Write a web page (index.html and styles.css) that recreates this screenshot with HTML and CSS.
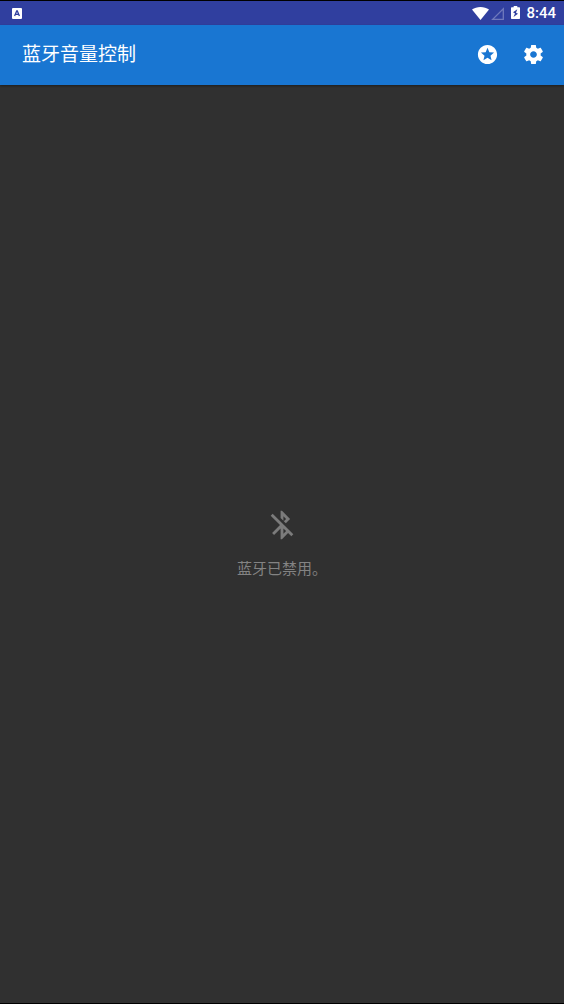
FILE: index.html
```html
<!DOCTYPE html>
<html lang="zh-CN">
<head>
<meta charset="utf-8">
<meta name="viewport" content="width=device-width, initial-scale=1">
<title>蓝牙音量控制</title>
<link rel="stylesheet" href="styles.css">
</head>
<body>
<div class="screen">
  <div class="status-bar">
    <svg class="notice-icon" viewBox="0 0 10 11" aria-hidden="true">
      <rect width="10" height="11" rx="1" fill="#fff"/>
      <path d="M2.600 8 4.700 3h.6l2.100 5M3.500 6.300h3" fill="none" stroke="#303f9f" stroke-width="1.300"/>
    </svg>
    <div class="status-right">
      <svg class="wifi-icon" viewBox="0 0 17 13" aria-hidden="true">
        <path d="M8.500 13 0 2.600C2.400.9 5.200 0 8.500 0S14.600.9 17 2.600z" fill="#fff"/>
      </svg>
      <svg class="signal-icon" viewBox="0 0 13 13" aria-hidden="true">
        <path d="M12.300 1.700v10.600H1.700z" fill="none" stroke="#6f79bc" stroke-width="1.300"/>
      </svg>
      <svg class="battery-icon" viewBox="0 0 9 14" aria-hidden="true">
        <path fill="#fff" fill-rule="evenodd" d="M2.700 0h3.600v1.300h2q.7 0 .7.7v10.300q0 .7-.7.7H.7Q0 13 0 12.300V2q0-.7.7-.7h2zM6.300 3.300 2 6.300 4 7.400 2.500 11 7 7.800 5 6.700z"/>
      </svg>
      <time class="clock">8:44</time>
    </div>
  </div>
  <header class="app-bar">
    <h1 class="title">蓝牙音量控制</h1>
    <button class="action" type="button" aria-label="收藏">
      <svg viewBox="0 0 24 24" aria-hidden="true"><path d="M11.990 2C6.470 2 2 6.480 2 12s4.470 10 9.990 10C17.520 22 22 17.520 22 12S17.520 2 11.990 2zm4.240 16L12 15.450 7.770 18l1.120-4.810-3.730-3.230 4.920-.42L12 5l1.920 4.530 4.920.42-3.730 3.230L16.230 18z"/></svg>
    </button>
    <button class="action" type="button" aria-label="设置">
      <svg viewBox="0 0 24 24" aria-hidden="true"><path d="M19.430 12.980c.04-.32.07-.64.07-.98s-.03-.66-.07-.98l2.110-1.650c.19-.15.24-.42.12-.64l-2-3.460c-.12-.22-.39-.3-.61-.22l-2.490 1c-.52-.4-1.080-.73-1.690-.98l-.38-2.650C14.460 2.180 14.250 2 14 2h-4c-.25 0-.46.18-.49.42l-.38 2.650c-.61.25-1.170.59-1.690.98l-2.490-1c-.23-.09-.49 0-.61.22l-2 3.460c-.13.22-.07.49.12.64l2.110 1.650c-.04.32-.07.65-.07.98s.03.66.07.98l-2.110 1.650c-.19.15-.24.42-.12.64l2 3.460c.12.22.39.3.61.22l2.490-1c.52.4 1.080.73 1.690.98l.38 2.650c.03.24.24.42.49.42h4c.25 0 .46-.18.49-.42l.38-2.650c.61-.25 1.170-.59 1.690-.98l2.490 1c.23.09.49 0 .61-.22l2-3.460c.12-.22.07-.49-.12-.64l-2.110-1.650zM12 15.500c-1.930 0-3.500-1.570-3.500-3.500s1.570-3.500 3.500-3.500 3.500 1.570 3.500 3.500-1.570 3.500-3.500 3.500z"/></svg>
    </button>
  </header>
  <main class="content">
    <svg class="bluetooth-icon" viewBox="0 0 24 24" aria-hidden="true"><path d="M13 5.830l1.880 1.880-1.600 1.600 1.410 1.410 3.020-3.020L12 2h-1v5.030l2 2v-3.200zM5.410 4L4 5.410 10.590 12 5 17.590 6.410 19 11 14.410V22h1l4.290-4.290 2.300 2.290L20 18.590 5.410 4zM13 18.170v-3.760l1.880 1.880L13 18.170z"/></svg>
    <p class="message">蓝牙已禁用。</p>
  </main>
</div>
</body>
</html>
```
FILE: styles.css
```css
* {
  box-sizing: border-box;
}

body {
  margin: 0;
  background: #303030;
  color: #fff;
  font-family: Roboto, "Noto Sans CJK SC", sans-serif;
}

.screen {
  display: flex;
  flex-direction: column;
  min-height: 100vh;
  border-top: 1px solid #000;
  border-bottom: 1px solid #000;
}

.status-bar {
  display: flex;
  align-items: center;
  justify-content: space-between;
  height: 24px;
  padding: 0 8px 0 12px;
  background: #303f9f;
}

.notice-icon {
  width: 10px;
  height: 11px;
}

.status-right {
  display: flex;
  align-items: center;
}

.wifi-icon {
  width: 17px;
  height: 13px;
}

.signal-icon {
  width: 13px;
  height: 13px;
  margin-left: 2px;
}

.battery-icon {
  width: 9px;
  height: 14px;
  margin-left: 7px;
}

.clock {
  margin-left: 6px;
  font-size: 15px;
  font-weight: 500;
  line-height: 24px;
}

.app-bar {
  display: flex;
  align-items: flex-start;
  height: 60px;
  padding: 6px 8px 0 22px;
  background: #1976d2;
  box-shadow: 0 1px 2px rgba(0, 0, 0, 0.4);
}

.title {
  flex: 1;
  margin: 0;
  font-size: 19px;
  font-weight: 400;
  line-height: 48px;
}

.action {
  display: flex;
  align-items: center;
  justify-content: center;
  width: 46px;
  height: 46px;
  padding: 0;
  border: 0;
  background: none;
}

.action svg {
  width: 23px;
  height: 23px;
  fill: #fff;
}

.content {
  display: flex;
  flex: 1;
  flex-direction: column;
  align-items: center;
  justify-content: center;
  gap: 16px;
  color: #838383;
}

.bluetooth-icon {
  width: 34px;
  height: 34px;
  fill: #7b7b7b;
}

.message {
  margin: 0;
  font-size: 15px;
  line-height: 22px;
}
```
